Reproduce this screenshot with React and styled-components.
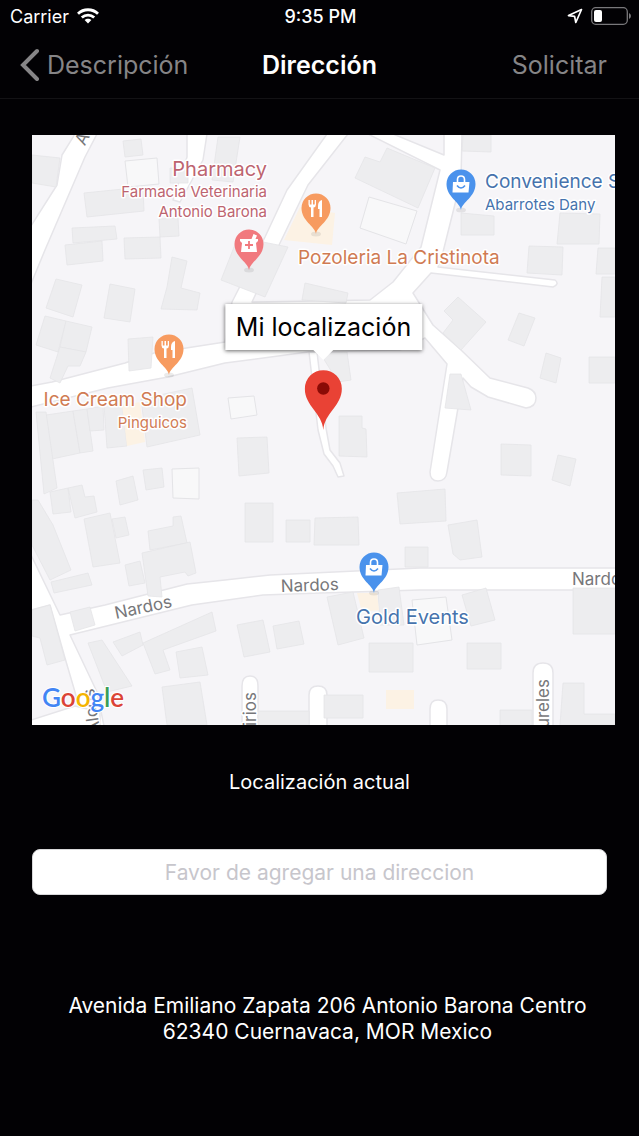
import React, { Component } from 'react';
import styled, { createGlobalStyle } from 'styled-components';

const GlobalStyle = createGlobalStyle`
	body {
		margin: 0;
		background: #020104;
		color: #ffffff;
		font-family: Inter, "Liberation Sans", sans-serif;
	}
`;

const Screen = styled.div`
	display: flex;
	flex-direction: column;
	min-height: 100vh;
`;

const StatusBar = styled.div`
	display: grid;
	grid-template-columns: 1fr auto 1fr;
	align-items: center;
	height: 32px;
	padding: 0 8px 0 10px;
	font-size: 18px;
`;

const StatusGroup = styled.div`
	display: flex;
	align-items: center;
	gap: 8px;
	justify-content: ${props => props.$end ? 'flex-end' : 'flex-start'};
`;

const Clock = styled.span`
	font-weight: 500;
`;

const NavBar = styled.header`
	display: grid;
	grid-template-columns: 1fr auto 1fr;
	align-items: center;
	height: 66px;
	padding: 0 20px;
	border-bottom: 1px solid #131215;
`;

const NavButton = styled.button`
	display: flex;
	align-items: center;
	gap: 8px;
	justify-self: ${props => props.$end ? 'end' : 'start'};
	padding: 0 ${props => props.$end ? '12px' : '0'} 0 0;
	border: 0;
	background: none;
	color: #868587;
	font-family: inherit;
	font-size: 25px;
	cursor: pointer;
`;

const Title = styled.h1`
	margin: 0;
	font-size: 25px;
	font-weight: 600;
`;

const Content = styled.main`
	display: flex;
	flex-direction: column;
	padding: 36px 24px 32px 32px;
`;

const MapFrame = styled.div`
	position: relative;
	aspect-ratio: 583 / 590;
	overflow: hidden;
	background: #f6f5f8;
`;

const MapDrawing = styled.svg`
	display: block;
	width: 100%;
	height: 100%;
	font-family: Inter, "Liberation Sans", sans-serif;
`;

// sits on the map with the tip of the pin near the centre
const Marker = styled.div`
	position: absolute;
	left: 50%;
	bottom: 50%;
	transform: translateX(-50%);
	display: flex;
	flex-direction: column;
	align-items: center;
	gap: 20px;
`;

const Callout = styled.div`
	position: relative;
	padding: 0 11px;
	background: #ffffff;
	box-shadow: 0 1px 4px rgba(0, 0, 0, 0.6);
	color: #000000;
	font-size: 25px;
	line-height: 46px;
	white-space: nowrap;

	&::after {
		content: '';
		position: absolute;
		left: 50%;
		top: 100%;
		margin-left: -10px;
		border: 10px solid transparent;
		border-top-color: #ffffff;
		border-bottom: 0;
	}
`;

const Form = styled.form`
	display: flex;
	flex-direction: column;
	align-items: center;
	gap: 54px;
	margin: 44px 8px 0 0;
`;

const Label = styled.label`
	font-size: 20px;
	line-height: 26px;
`;

const Input = styled.input`
	box-sizing: border-box;
	width: 100%;
	height: 46px;
	border: 1px solid #d8d8da;
	border-radius: 8px;
	background: #ffffff;
	color: #000000;
	font-family: inherit;
	font-size: 21px;
	text-align: center;

	&::placeholder {
		color: #c7c6cc;
		opacity: 1;
	}
`;

const Address = styled.p`
	max-width: 540px;
	margin: 98px auto 0;
	padding-left: 8px;
	font-size: 21px;
	line-height: 26px;
	text-align: center;
`;

const buildings = [
	'123,141 141,139 143,155 125,157',
	'84,193 143,187 144,211 87,217',
	'72,228 115,226 117,239 73,243',
	'65,245 102,241 103,261 67,265',
	'124,238 160,237 161,258 125,259',
	'159,219 178,218 179,236 160,237',
	'56,279 82,285 73,317 46,308',
	'110,284 135,289 130,322 104,318',
	'172,257 187,261 181,288 200,293 197,310 161,309 167,287',
	'45,316 66,321 58,352 36,345',
	'66,321 92,327 86,352 60,347',
	'60,347 86,352 80,366 68,366 60,383 50,378',
	'32,155 60,158 56,187 32,183',
	'170,168 188,168 188,183 170,183',
	'218,137 240,137 233,182 212,180',
	'365,157 380,162 387,148 435,168 418,208 355,178',
	'238,237 288,247 265,297 221,280',
	'302,300 305,283 348,293 346,303',
	'463,135 491,135 491,152 462,151',
	'461,213 494,216 494,235 461,235',
	'560,213 600,214 599,244 557,244',
	'529,246 563,247 562,275 527,273',
	'598,248 615,248 615,274 596,274',
	'602,277 615,277 615,317 600,317',
	'458,297 486,322 461,350 443,333 453,320 444,311',
	'519,313 535,318 524,346 508,340',
	'546,353 561,358 556,383 540,378',
	'589,357 615,357 615,383 589,383',
	'501,444 531,445 531,476 501,475',
	'558,455 576,459 570,486 552,480',
	'397,493 445,489 446,521 400,524',
	'448,525 477,520 482,557 460,560 453,554',
	'46,415 73,411 80,453 52,459',
	'73,411 87,409 93,451 80,453',
	'87,409 103,406 104,430 90,431',
	'104,405 122,403 127,446 107,448',
	'141,399 192,388 200,435 147,447',
	'128,339 153,337 151,368 129,371',
	'36,412 46,412 57,488 44,494',
	'116,481 133,476 138,500 120,505',
	'143,470 162,468 164,487 146,490',
	'50,492 68,488 71,512 53,514',
	'68,488 82,485 85,497 94,496 97,512 75,518',
	'84,519 110,513 120,563 93,567',
	'38,500 53,525 71,570 50,580 32,545 32,500',
	'112,519 125,517 129,535 116,538',
	'51,582 88,573 92,585 54,593',
	'148,531 173,526 173,517 181,516 187,543 150,550',
	'142,553 190,542 196,573 188,576 185,572 160,577 162,597 148,596',
	'125,565 140,561 145,583 129,586',
	'70,612 90,607 95,625 75,631',
	'32,610 50,605 65,660 47,665 40,638 32,636',
	'88,643 102,640 132,686 107,692',
	'113,642 140,632 143,645 122,656',
	'143,643 212,612 216,631 163,650 170,670 155,674',
	'176,652 202,647 208,675 180,678',
	'162,687 200,682 207,725 167,725',
	'245,503 273,503 273,542 245,542',
	'286,520 310,520 310,542 286,542',
	'315,518 358,517 359,545 314,545',
	'237,625 263,620 270,652 244,657',
	'273,626 299,621 304,644 277,649',
	'327,597 353,592 364,638 338,645',
	'405,547 428,547 428,567 405,567',
	'378,590 399,587 404,625 380,625',
	'369,643 413,643 413,672 369,672',
	'324,695 363,695 363,718 324,718',
	'258,711 309,711 309,725 258,725',
	'462,595 486,588 495,620 471,626',
	'467,643 501,643 501,669 467,669',
	'573,588 615,588 615,634 573,634',
	'563,683 584,683 584,714 615,714 615,725 560,725',
	'500,710 532,710 532,725 500,725',
	'237,438 267,437 269,473 239,476',
	'339,416 362,416 362,428 366,429 367,457 339,456',
	'320,353 347,352 351,380 338,382',
	'450,374 461,374 471,410 445,408',
];

const outlines = [
	'125,161 157,158 159,184 128,187',
	'369,197 417,211 406,244 360,228',
	'172,469 199,468 199,499 173,498',
	'228,398 254,396 257,415 231,419',
	'412,600 446,597 452,640 417,645',
];

const warmAreas = [
	'300,207 335,213 332,245 284,240',
	'122,405 140,402 145,442 127,446',
	'357,593 377,593 379,610 362,612',
	'386,690 414,690 414,709 386,709',
];

const roads = [
	'M75 134L62 155L57 185L31 226V284L45 250L85 157L97 134Z',
	'M187 134V157L173 200L180 202L203 160L207 134Z',
	'M327 134L287 190L265 237L232 302L225 342L154 353L125 363L52 382L31 386V407L108 388L168 377L225 363L308 352L400 350L425 338L447 364L430 472Q430 481 438 481Q446 481 447 472L458 408L463 378L471 387L488 397L526 408Q536 407 536 398Q536 391 528 388L490 378L461 350L433 325L413 293L431 273L553 287Q560 284 555 280L438 267L443 252L461 180L462 134H444V155L393 134H368L440 170L421 247L393 282L370 300L252 302L280 243L308 185L348 134Z',
	'M31 555L60 615L105 605L187 584L225 580L270 575L420 568H616V590H420L320 593L263 595L192 605L70 635L97 692L104 726H84L75 692L65 658L50 605L31 610Z',
	'M309 352L317 352L326 428L330 450L340 463L344 476L338 477L333 466L324 454L318 430Z',
	'M242 726V686Q242 676 250 676Q258 676 258 686V726Z',
	'M309 726V695Q309 686 318 686Q327 686 327 695V726Z',
	'M430 726V709Q430 700 438 700Q447 700 447 709V726Z',
	'M533 726V673Q533 663 543 663Q553 663 553 673V726Z',
	'M31 720L75 706L100 712V726H31Z',
];

const colors = {
	food: '#d07b53',
	health: '#bd6470',
	shop: '#4673ad',
};

const Fork = () => (
	<g fill="#fff">
		<path d="M-7.500 -8V-3.500Q-7.500 -1 -5 -0.500V9H-2.500V-0.500Q0 -1 0 -3.500V-8H-1.300V-3.500H-3V-8H-4.500V-3.500H-6.200V-8Z" />
		<path d="M6 -8Q2 -7 2 -2V1H3.500V9H6Z" />
	</g>
);

const Bag = () => (
	<g>
		<path d="M-8 -2H8.500L7.500 8.500H-8.500Z" fill="#fff" />
		<path d="M-3.500 -2V-4.500Q-3.500 -8 0 -8Q3.500 -8 3.500 -4.500V-2" fill="none" stroke="#fff" strokeWidth="1.600" />
		<path d="M-4 1.500Q0 6.500 4 1.500" fill="none" stroke="#4a92ec" strokeWidth="1.600" />
	</g>
);

const Mortar = () => (
	<g>
		<path d="M-9 -5H2.500L4.500 -10L8 -8.500L6.500 -5H9V-3L7 -1L8 8H-8L-7 -1L-9 -3Z" fill="#fff" />
		<path d="M0 -3V5M-4 1H4" stroke="#f1797e" strokeWidth="1.800" />
	</g>
);

const Pin = ({ x, y, color, children }) => (
	<g transform={`translate(${x} ${y})`}>
		<ellipse cx="0" cy="26" rx="5" ry="2.500" fill="#000" opacity="0.080" />
		<path d="M0 26C-1 18 -14.500 13 -14.500 0A14.500 14.500 0 0 1 14.500 0C14.500 13 1 18 0 26Z" fill={color} />
		{children}
	</g>
);

const MapLabel = styled.text`
	fill: ${props => props.$color || '#77777a'};
	font-size: ${props => props.$size || 17}px;
	text-anchor: ${props => props.$anchor || 'start'};
	paint-order: stroke;
	stroke: #ffffff;
	stroke-width: 3px;
	stroke-linejoin: round;
`;

const Logo = styled.text`
	font-family: Lato, sans-serif;
	font-size: 26px;
	font-weight: 600;
	paint-order: stroke;
	stroke: #ffffff;
	stroke-width: 2px;
`;

const StreetMap = () => (
	<MapDrawing viewBox="32 135 583 590" preserveAspectRatio="xMidYMid slice" role="img" aria-label="Mapa">
		<g fill="#ffffff" stroke="#e6e5e9" strokeWidth="1.500" strokeLinejoin="round">
			{roads.map(d => <path key={d} d={d} />)}
		</g>
		<g fill="#ededef" stroke="#e4e4e7" strokeWidth="0.800">
			{buildings.map(points => <polygon key={points} points={points} />)}
		</g>
		<g fill="#f8f8f9" stroke="#e4e4e7" strokeWidth="1">
			{outlines.map(points => <polygon key={points} points={points} />)}
		</g>
		<g fill="#fcf2e4">
			{warmAreas.map(points => <polygon key={points} points={points} />)}
		</g>

		<MapLabel transform="translate(90 136) rotate(-63)" $anchor="end">A</MapLabel>
		<MapLabel transform="translate(116 619) rotate(-12)">Nardos</MapLabel>
		<MapLabel transform="translate(281 592) rotate(-2)">Nardos</MapLabel>
		<MapLabel x="572" y="585">Nardos</MapLabel>
		<MapLabel transform="translate(256 692) rotate(-90)" $anchor="end">Lirios</MapLabel>
		<MapLabel transform="translate(549 679) rotate(-90)" $anchor="end">Laureles</MapLabel>
		<MapLabel transform="translate(94 688) rotate(-98)" $anchor="end">Alcos</MapLabel>

		<Pin x={316} y={208} color="#f79b60"><Fork /></Pin>
		<Pin x={169} y={349} color="#f79b60"><Fork /></Pin>
		<Pin x={249} y={244} color="#f1797e"><Mortar /></Pin>
		<Pin x={461} y={184} color="#4a92ec"><Bag /></Pin>
		<Pin x={374} y={567} color="#4a92ec"><Bag /></Pin>

		<MapLabel x="267" y="176" $size={20} $anchor="end" $color={colors.health}>Pharmacy</MapLabel>
		<MapLabel x="267" y="197" $size={15} $anchor="end" $color={colors.health}>Farmacia Veterinaria</MapLabel>
		<MapLabel x="267" y="217" $size={15} $anchor="end" $color={colors.health}>Antonio Barona</MapLabel>
		<MapLabel x="485" y="188" $size={19} $color={colors.shop}>Convenience Store</MapLabel>
		<MapLabel x="485" y="210" $size={15} $color={colors.shop}>Abarrotes Dany</MapLabel>
		<MapLabel x="298" y="264" $size={19} $color={colors.food}>Pozoleria La Cristinota</MapLabel>
		<MapLabel x="187" y="406" $size={19} $anchor="end" $color={colors.food}>Ice Cream Shop</MapLabel>
		<MapLabel x="187" y="428" $size={15} $anchor="end" $color={colors.food}>Pinguicos</MapLabel>
		<MapLabel x="356" y="624" $size={20} $color={colors.shop}>Gold Events</MapLabel>

		<Logo x="42" y="707">
			<tspan fill="#4285f4">G</tspan>
			<tspan fill="#db4437">o</tspan>
			<tspan fill="#f4b400">o</tspan>
			<tspan fill="#4285f4">g</tspan>
			<tspan fill="#3c9e56">l</tspan>
			<tspan fill="#db4437">e</tspan>
		</Logo>
	</MapDrawing>
);

const WifiIcon = () => (
	<svg width="22" height="16" viewBox="0 0 22 16" fill="none" stroke="#fff" strokeWidth="2.800">
		<path d="M1 5.800C6.500 0.400 15.500 0.400 21 5.800" />
		<path d="M4.800 9.600C8.300 6.200 13.700 6.200 17.200 9.600" />
		<path d="M11 15.500L7.600 12.100C9.500 10.300 12.500 10.300 14.400 12.100Z" fill="#fff" stroke="none" />
	</svg>
);

const LocationIcon = () => (
	<svg width="16" height="16" viewBox="0 0 16 16" fill="none" stroke="#fff" strokeWidth="1.700" strokeLinejoin="round">
		<path d="M14.500 1.500L1.500 7.600L7.600 8.300L8.800 14.500Z" />
	</svg>
);

const BatteryIcon = () => (
	<svg width="40" height="18" viewBox="0 0 40 18">
		<rect x="0.700" y="0.700" width="35.600" height="16.600" rx="4" fill="none" stroke="#79787b" strokeWidth="1.300" />
		<path d="M38 6Q40 7 40 9Q40 11 38 12Z" fill="#79787b" />
		<rect x="3" y="3" width="8" height="12" rx="2" fill="#fff" />
	</svg>
);

const BackIcon = () => (
	<svg width="19" height="34" viewBox="0 0 19 34" fill="none" stroke="#868587" strokeWidth="4" strokeLinecap="round">
		<path d="M17 3L3 17L17 31" />
	</svg>
);

const MarkerIcon = () => (
	<svg width="38" height="60" viewBox="0 0 38 60">
		<path d="M19 60C18 43 0.500 36 0.500 18.700A18.500 18.500 0 0 1 37.500 18.700C37.500 36 20 43 19 60Z" fill="#e94235" />
		<circle cx="19" cy="18.500" r="6.200" fill="#8a0b06" />
	</svg>
);

class App extends Component {
	constructor() {
		super();
		this.state = { address: '' };
		this.setAddress = this.setAddress.bind(this);
	}

	setAddress(e) {
		this.setState({ address: e.target.value });
	}

	render() {
		return (
			<Screen>
				<GlobalStyle />
				<StatusBar>
					<StatusGroup>
						<span>Carrier</span>
						<WifiIcon />
					</StatusGroup>
					<Clock>9:35 PM</Clock>
					<StatusGroup $end>
						<LocationIcon />
						<BatteryIcon />
					</StatusGroup>
				</StatusBar>
				<NavBar>
					<NavButton type="button">
						<BackIcon />
						Descripción
					</NavButton>
					<Title>Dirección</Title>
					<NavButton type="button" $end>Solicitar</NavButton>
				</NavBar>
				<Content>
					<MapFrame>
						<StreetMap />
						<Marker>
							<Callout>Mi localización</Callout>
							<MarkerIcon />
						</Marker>
					</MapFrame>
					<Form>
						<Label htmlFor="address">Localización actual</Label>
						<Input
							id="address"
							type="text"
							placeholder="Favor de agregar una direccion"
							value={this.state.address}
							onChange={this.setAddress} />
					</Form>
					<Address>
						Avenida Emiliano Zapata 206 Antonio Barona Centro 62340 Cuernavaca, MOR Mexico
					</Address>
				</Content>
			</Screen>
		);
	}
}

export default App;
